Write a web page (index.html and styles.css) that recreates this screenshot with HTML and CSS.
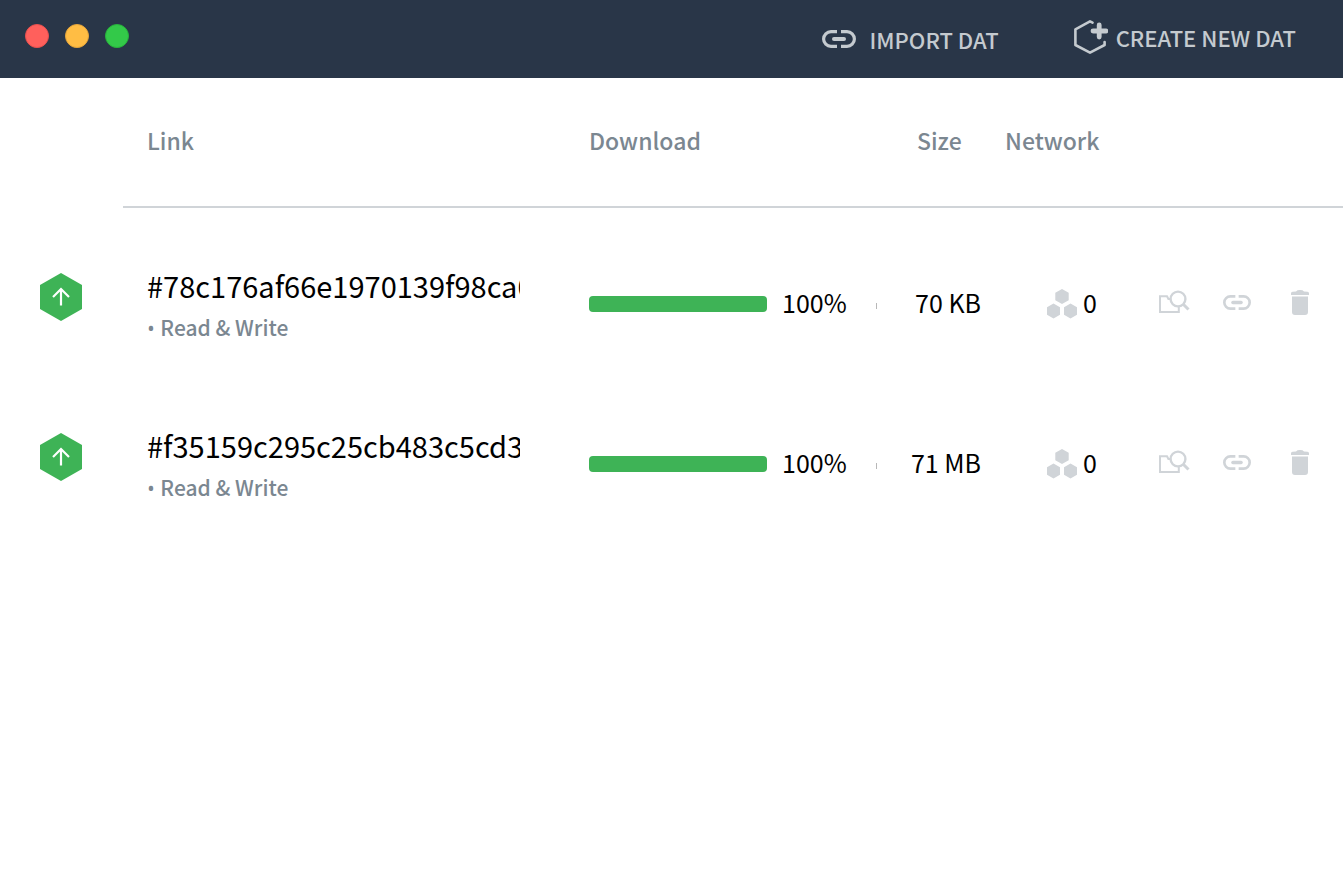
FILE: index.html
```
<!DOCTYPE html>
<html lang="en">
<head>
<meta charset="utf-8">
<title>Dat</title>
<link rel="stylesheet" href="styles.css">
</head>
<body>
<svg class="sprite" aria-hidden="true">
  <symbol id="link" viewBox="0 0 34 18">
    <path d="M15 1.6H9A7.4 7.4 0 0 0 9 16.4H15M19 1.6H25A7.4 7.4 0 0 1 25 16.4H19" fill="none" stroke="currentColor" stroke-width="3.2"/>
    <path d="M12 9H22" fill="none" stroke="currentColor" stroke-width="4" stroke-linecap="round"/>
  </symbol>
  <symbol id="create" viewBox="0 0 34 34">
    <path d="M18.5 2.6L16 1.4L1.4 9.3V25L16 32.6L30.6 25V22" fill="none" stroke="currentColor" stroke-width="2.6" stroke-linejoin="round" stroke-linecap="round"/>
    <path d="M25.2 5V17M19 11H32" fill="none" stroke="currentColor" stroke-width="4.8" stroke-linecap="round"/>
  </symbol>
  <symbol id="upload" viewBox="0 0 42 48">
    <path d="M21 0L42 12V36L21 48L0 36V12Z" fill="#3eb356"/>
    <path d="M21 32.5V16.5M13 24L21 16L29 24" fill="none" stroke="#fff" stroke-width="2.2"/>
  </symbol>
  <symbol id="peers" viewBox="0 0 30 30">
    <path d="M15 0L21.7 3.8V11.2L15 15L8.3 11.2V3.8ZM6.5 14.6L13 18.3V25.8L6.5 29.5L0 25.8V18.3ZM23.5 14.6L30 18.3V25.8L23.5 29.5L17 25.8V18.3Z" fill="currentColor"/>
  </symbol>
  <symbol id="browse" viewBox="0 0 32 24">
    <path d="M12.5 9H10.4L9 6.2H2V22H20.8V16" fill="none" stroke="currentColor" stroke-width="2"/>
    <circle cx="20" cy="9" r="7.4" fill="none" stroke="currentColor" stroke-width="2.4"/>
    <path d="M25 14L30.5 19.5" fill="none" stroke="currentColor" stroke-width="3"/>
  </symbol>
  <symbol id="trash" viewBox="0 0 18 25">
    <path d="M0 5V3.2Q0 2 1.5 1.8L5 1.4Q6 0 9 0Q12 0 13 1.4L16.5 1.8Q18 2 18 3.2V5ZM1 6.4H17V22Q17 25 14 25H4Q1 25 1 22Z" fill="currentColor"/>
  </symbol>
</svg>

<header class="titlebar">
  <div class="window-controls">
    <button class="dot dot-close" aria-label="Close"></button>
    <button class="dot dot-minimize" aria-label="Minimize"></button>
    <button class="dot dot-zoom" aria-label="Zoom"></button>
  </div>
  <div class="commands">
    <button class="command command-import"><svg class="icon-link"><use href="#link"/></svg>IMPORT DAT</button>
    <button class="command command-create"><svg class="icon-create"><use href="#create"/></svg>CREATE NEW DAT</button>
  </div>
</header>

<main>
  <table class="dats">
    <colgroup>
      <col class="col-status"><col class="col-link"><col class="col-download"><col class="col-size"><col class="col-network"><col class="col-actions">
    </colgroup>
    <thead>
      <tr>
        <td></td>
        <th scope="col">Link</th>
        <th scope="col">Download</th>
        <th scope="col">Size</th>
        <th scope="col">Network</th>
        <td class="rule"></td>
      </tr>
    </thead>
    <tbody>
      <tr>
        <td class="status"><svg class="hexagon"><use href="#upload"/></svg></td>
        <td class="link"><div class="hash">#78c176af66e1970139f98ca0</div><div class="access"><span class="bullet">• </span>Read &amp; Write</div></td>
        <td><div class="download"><div class="bar"><div class="fill" style="width:100%"></div></div><span class="percent">100%</span><span class="speed"></span></div></td>
        <td class="size">70 KB</td>
        <td><div class="network"><svg class="icon-peers"><use href="#peers"/></svg>0</div></td>
        <td><div class="actions">
          <button class="action" aria-label="Open folder"><svg class="icon-browse"><use href="#browse"/></svg></button>
          <button class="action" aria-label="Copy link"><svg class="icon-copy"><use href="#link"/></svg></button>
          <button class="action" aria-label="Delete"><svg class="icon-trash"><use href="#trash"/></svg></button>
        </div></td>
      </tr>
      <tr>
        <td class="status"><svg class="hexagon"><use href="#upload"/></svg></td>
        <td class="link"><div class="hash">#f35159c295c25cb483c5cd3</div><div class="access"><span class="bullet">• </span>Read &amp; Write</div></td>
        <td><div class="download"><div class="bar"><div class="fill" style="width:100%"></div></div><span class="percent">100%</span><span class="speed"></span></div></td>
        <td class="size">71 MB</td>
        <td><div class="network"><svg class="icon-peers"><use href="#peers"/></svg>0</div></td>
        <td><div class="actions">
          <button class="action" aria-label="Open folder"><svg class="icon-browse"><use href="#browse"/></svg></button>
          <button class="action" aria-label="Copy link"><svg class="icon-copy"><use href="#link"/></svg></button>
          <button class="action" aria-label="Delete"><svg class="icon-trash"><use href="#trash"/></svg></button>
        </div></td>
      </tr>
    </tbody>
  </table>
</main>
</body>
</html>
```
FILE: styles.css
```
* { box-sizing: border-box; }
body {
  margin: 0;
  background: #fff;
  color: #000;
  font-family: "Noto Sans CJK SC", "Noto Sans", sans-serif;
  font-size: 25px;
  line-height: 32px;
}
svg { display: block; flex: none; }
button { border: 0; padding: 0; background: none; font: inherit; color: inherit; }
.sprite { position: absolute; width: 0; height: 0; }

.titlebar {
  display: flex;
  justify-content: space-between;
  height: 78px;
  padding: 0 47px 0 25px;
  background: #293648;
}
.window-controls { display: flex; gap: 16px; padding-top: 24px; }
.dot { width: 24px; height: 24px; border-radius: 50%; border: 1px solid; }
.dot-close { background: #ff605c; border-color: #e8504e; }
.dot-minimize { background: #ffbd44; border-color: #e5a53a; }
.dot-zoom { background: #33c949; border-color: #27b33b; }
.commands { display: flex; align-items: center; gap: 75px; }
.command {
  display: flex;
  align-items: center;
  color: #c4cacf;
  font-size: 22px;
  font-weight: 500;
  white-space: nowrap;
}
.command-import { gap: 14px; }
.command-create { gap: 8px; padding-bottom: 4px; }
.icon-link { width: 34px; height: 18px; }
.icon-create { width: 34px; height: 34px; }

.dats { width: 100%; table-layout: fixed; border-collapse: separate; border-spacing: 0; }
.col-status { width: 123px; }
.col-download { width: 328px; }
.col-size { width: 88px; }
.col-network { width: 128px; }
.col-actions { width: 234px; }
.dats th {
  height: 130px;
  padding: 0 0 4px 24px;
  border-bottom: 2px solid #d0d4d8;
  color: #7b8791;
  font-weight: 500;
  font-size: 23px;
  text-align: left;
}
.rule { border-bottom: 2px solid #d0d4d8; }
.dats tbody td { height: 160px; padding: 28px 0 0; vertical-align: middle; }
.dats tbody .status { padding: 18px 0 0 40px; }
.hexagon { width: 42px; height: 48px; }
.dats tbody .link { padding: 34px 45px 0 24px; }
.hash { font-size: 29px; line-height: 44px; overflow: hidden; white-space: nowrap; }
.access { font-size: 21px; line-height: 40px; color: #7b8791; font-weight: 500; }
.bullet { font-family: "Open Sans", sans-serif; }
.download { display: flex; align-items: center; padding-left: 24px; }
.bar { width: 178px; height: 16px; margin-top: 4px; border-radius: 4px; background: #d0d4d8; overflow: hidden; }
.fill { height: 100%; background: #3eb356; }
.percent { margin-left: 15px; }
.speed { width: 1px; height: 6px; margin: 8px 16px 0 auto; background: #b8b8b8; }
.size { text-align: right; white-space: nowrap; }
.network { display: flex; align-items: center; justify-content: flex-end; gap: 6px; padding-right: 12px; }
.icon-peers { width: 30px; height: 30px; margin-top: 4px; color: #d0d4d8; }
.actions { display: flex; justify-content: flex-end; gap: 31px; padding-right: 27px; color: #d0d4d8; }
.action { display: flex; align-items: center; justify-content: center; width: 32px; height: 32px; }
.icon-browse { width: 32px; height: 24px; }
.icon-copy { width: 28px; height: 15px; }
.icon-trash { width: 18px; height: 25px; }
```
